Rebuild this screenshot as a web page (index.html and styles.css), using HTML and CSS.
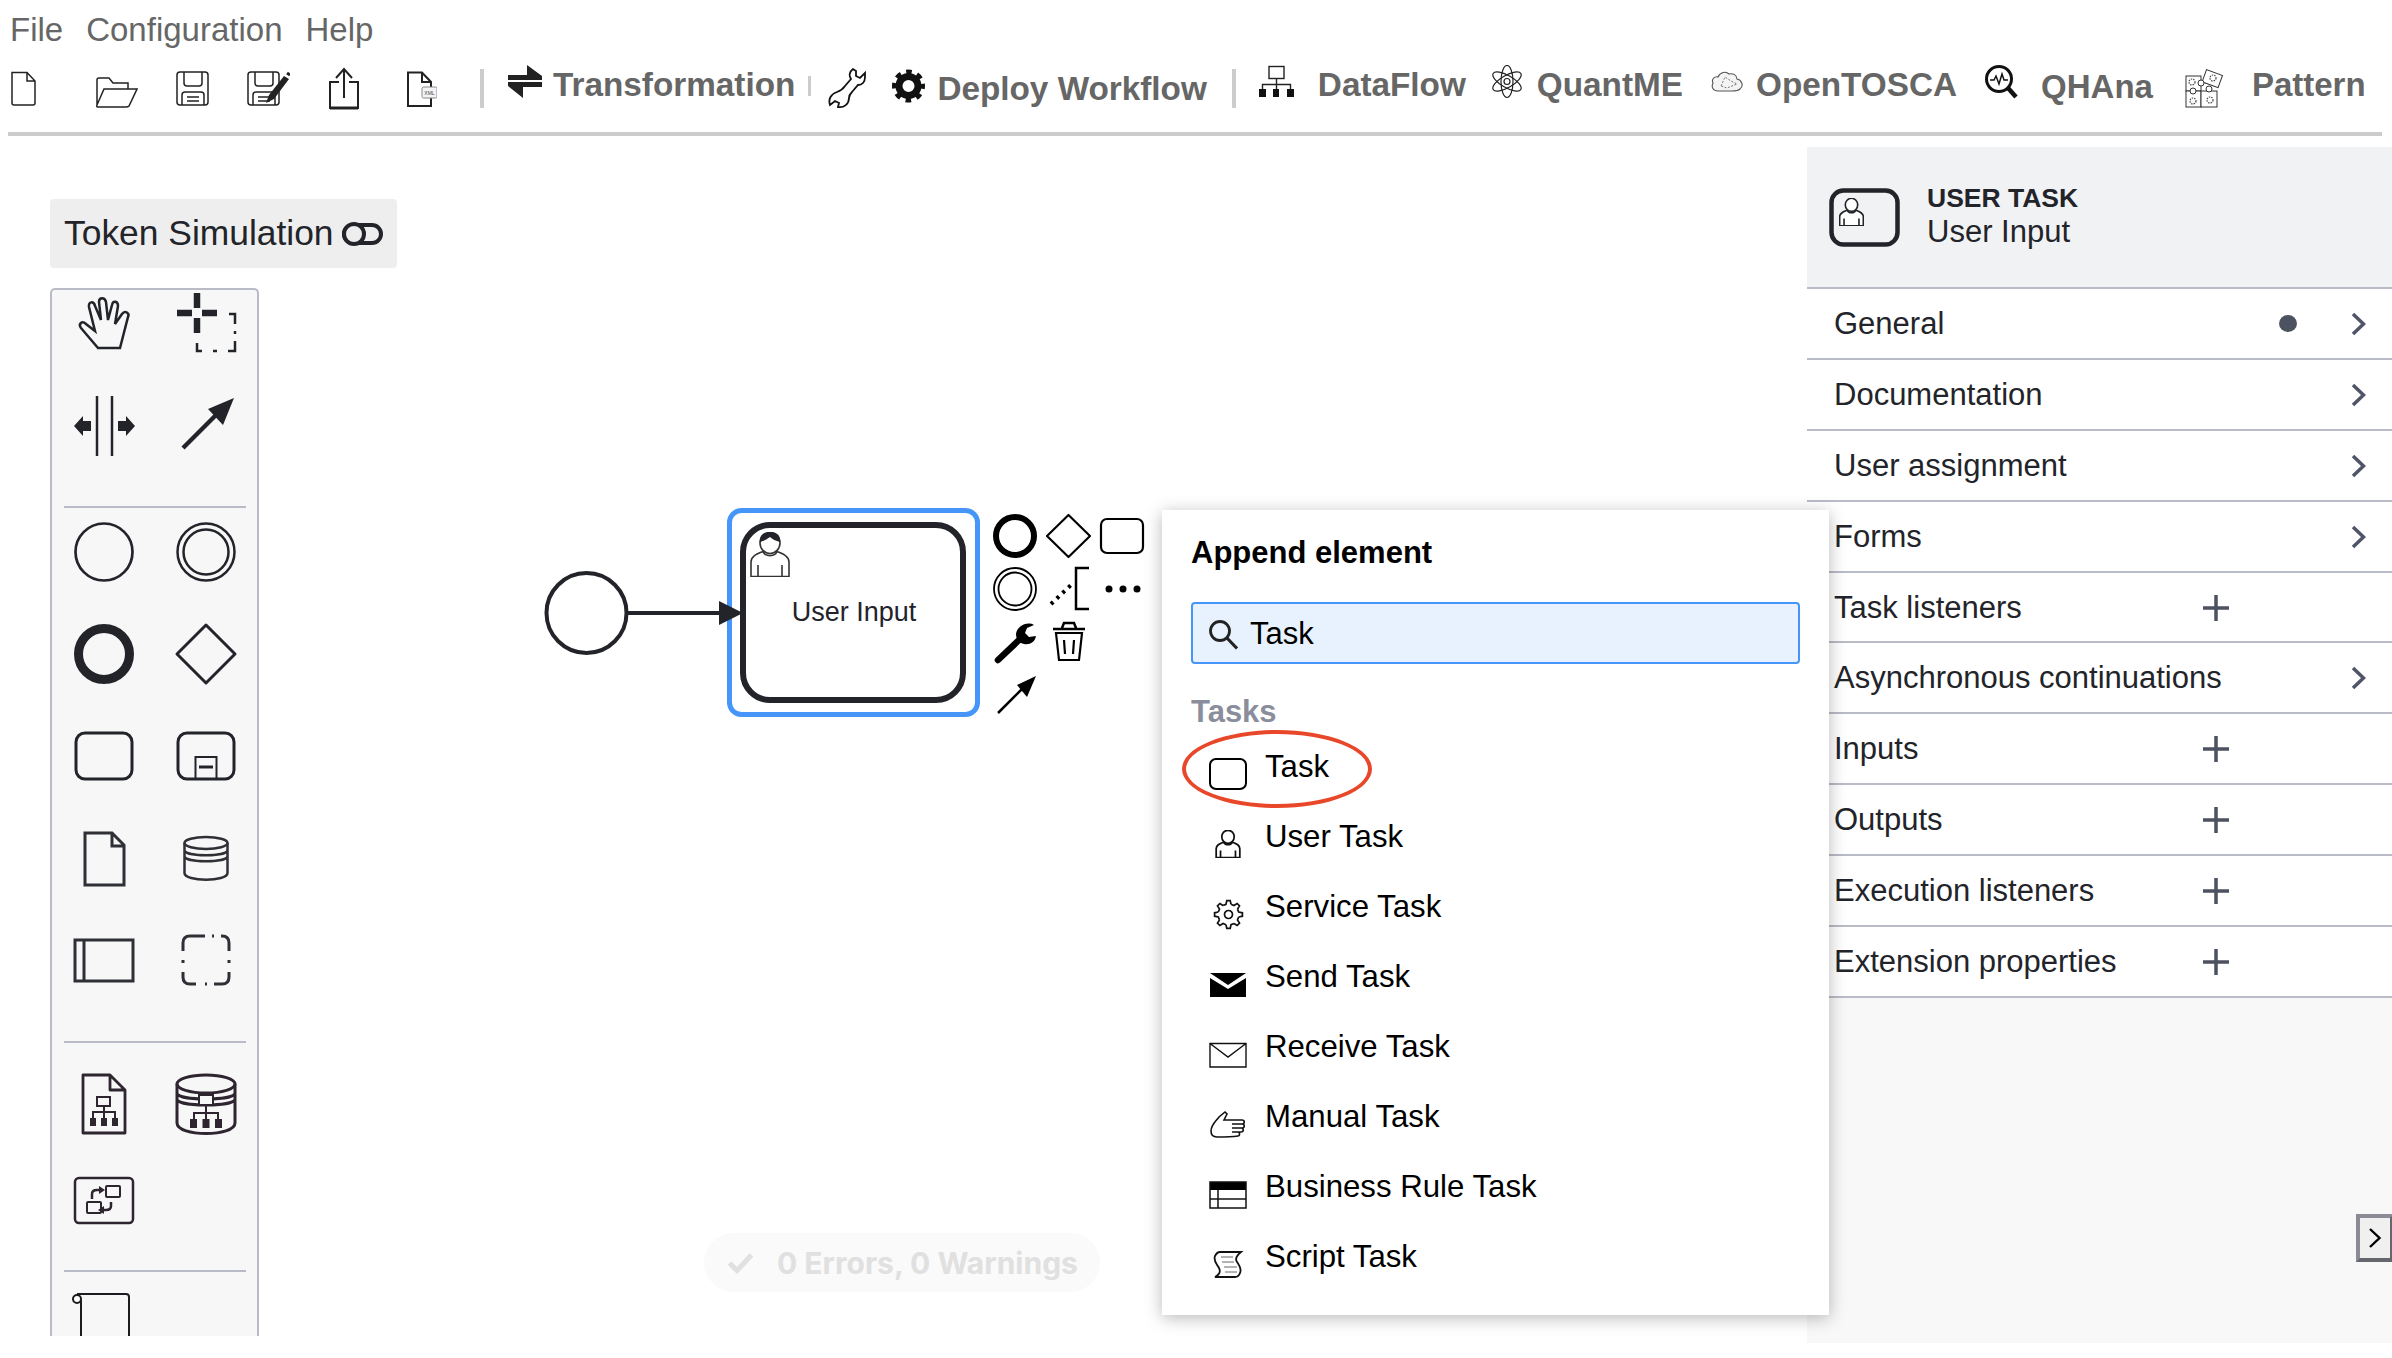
FILE: index.html
```html
<!DOCTYPE html>
<html lang="en">
<head>
  <meta charset="UTF-8"/>
  <title>Workflow Modeler</title>
  <link rel="stylesheet" href="styles.css">
</head>
<body>
  <svg class="defs" aria-hidden="true">
    <symbol id="user-line" viewBox="0 0 40 45">
      <path d="M1 44.500V30C1 24 7 22 13 19.500C15 25 25 25 27 19.500C33 22 39 24 39 30V44.500Z" fill="#fff" stroke="currentColor"/>
      <path d="M8 44V33M32 44V33" fill="none" stroke="currentColor"/>
      <ellipse cx="20" cy="11" rx="10" ry="10.500" fill="#fff" stroke="currentColor"/>
    </symbol>
    <symbol id="floppy" viewBox="0 0 33 46">
      <rect x="1" y="7" width="31" height="33" rx="3" fill="none" stroke="#222" stroke-width="1.500"/>
      <path d="M8 7V18Q8 21 11 21H23Q26 21 26 18V7M6 40V30Q6 27 9 27H25Q28 27 28 30V40M11 32H23M11 36H23" fill="none" stroke="#222" stroke-width="1.500"/>
    </symbol>
    <g id="cog-tooth">
      <path d="M2.500-10.200L1.700-13.900H-1.700L-2.500-10.200L-5.400-9" fill="none" stroke="#111" stroke-width="1.700"/>
    </g>
  </svg>

  <nav class="menubar">
    <span>File</span>
    <span>Configuration</span>
    <span>Help</span>
  </nav>

  <div class="toolbar">
    <svg class="t-new" width="25" height="46" viewBox="0 0 25 46"><path d="M1 7.500H16L24 16V38Q24 40 22 40H3Q1 40 1 38ZM16 7.500V16H24" fill="none" stroke="#222" stroke-width="1.500"/></svg>
    <svg class="t-open" width="43" height="46" viewBox="0 0 43 46"><path d="M2 40V15Q2 13 4 13H14L18 18H33V24M9 24H42L34 41Q33 42 31 42H3Q1 42 2 40Z" fill="none" stroke="#222" stroke-width="1.500"/></svg>
    <svg class="t-save" width="33" height="46"><use href="#floppy"/></svg>
    <svg class="t-saveas" width="43" height="46" viewBox="0 0 43 46">
      <use href="#floppy" width="33" height="46"/>
      <path d="M19 38L22 30L37 11L42 14L27 34Z" fill="#222"/>
      <path d="M40 8L43 10" stroke="#222" stroke-width="3"/>
    </svg>
    <svg class="t-upload" width="30" height="46" viewBox="0 0 30 46"><path d="M10 17H1V43H29V17H20" fill="none" stroke="#222" stroke-width="2"/><path d="M15 33V5M7 13L15 4L23 13" fill="none" stroke="#222" stroke-width="2"/><path d="M1 43H29" stroke="#222" stroke-width="3"/></svg>
    <svg class="t-xml" width="30" height="46" viewBox="0 0 30 46">
      <path d="M1 7.500H15L24 17V41H1ZM15 7.500V17H24" fill="none" stroke="#222" stroke-width="2"/>
      <rect x="15" y="22" width="15" height="11" rx="1.500" fill="#f4f4f4" stroke="#888"/>
      <text class="xml-tag" x="22.500" y="29.500" text-anchor="middle">XML</text>
    </svg>
    <div class="tb-sep t-sep1"></div>
    <svg class="t-trans" width="34" height="46" viewBox="0 0 34 46"><path d="M19 0L34 11V15H0V10H19ZM0 17H34V22H15V33L0 21Z" fill="#222"/></svg>
    <span class="tb-label l-trans">Transformation</span>
    <div class="tb-tick"></div>
    <svg class="t-wrench" width="38" height="46" viewBox="0 0 38 46"><path d="M25 4C21 7 21 11 23 14L17 21C15 24 12 26 9 27C3 29 0 34 2 40L7 36L11 38L10 42C16 43 21 39 21 33C21 31 22 29 24 27L30 20C34 20 37 17 37 12L37 8L32 13L28 11L28 6Z" fill="none" stroke="#111" stroke-width="1.800"/></svg>
    <svg class="t-gear" width="33" height="46" viewBox="0 0 33 46">
      <circle cx="16.500" cy="21" r="9.500" fill="none" stroke="#111" stroke-width="7"/>
      <circle cx="16.500" cy="21" r="14" fill="none" stroke="#111" stroke-width="5" stroke-dasharray="5.500 5.500" stroke-dashoffset="2.750"/>
    </svg>
    <span class="tb-label l-deploy">Deploy Workflow</span>
    <div class="tb-sep t-sep2"></div>
    <svg class="t-data" width="35" height="46" viewBox="0 0 35 46">
      <rect x="10" y="1.500" width="15" height="12" fill="none" stroke="#222" stroke-width="1.400"/>
      <path d="M17.500 13.500V20M3.500 25V19.500H31.500V25M17.500 20V25" fill="none" stroke="#222" stroke-width="1.400"/>
      <path d="M0 24H7V32H0ZM14 24H20V32H14ZM28 24H35V32H28Z" fill="#111"/>
    </svg>
    <span class="tb-label l-data">DataFlow</span>
    <svg class="t-atom" width="32" height="46" viewBox="0 0 32 46">
      <g fill="none" stroke="#222" stroke-width="1.200">
        <ellipse cx="16" cy="16.500" rx="6" ry="16"/>
        <ellipse cx="16" cy="16.500" rx="6" ry="16" transform="rotate(60 16 16.500)"/>
        <ellipse cx="16" cy="16.500" rx="6" ry="16" transform="rotate(-60 16 16.500)"/>
        <circle cx="16" cy="16.500" r="3"/>
      </g>
    </svg>
    <span class="tb-label l-quant">QuantME</span>
    <svg class="t-cloud" width="32" height="46" viewBox="0 0 32 46">
      <path d="M7 26C2 26 0 22 2 18C0 14 4 11 7 12C9 7 15 6 18 9C22 8 26 10 26 14C31 15 33 21 29 24C27 26 24 26 21 26Z" fill="#f4f4f4" stroke="#555" stroke-width="1.100"/>
      <path d="M10 21L14 12L20 16L26 19L16 23Z" fill="none" stroke="#777" stroke-width="1" stroke-dasharray="2 1.500"/>
    </svg>
    <span class="tb-label l-open">OpenTOSCA</span>
    <svg class="t-qhana" width="34" height="46" viewBox="0 0 34 46">
      <circle cx="15" cy="14" r="12.500" fill="none" stroke="#111" stroke-width="3"/>
      <path d="M24 23L32 32" stroke="#111" stroke-width="4.500"/>
      <path d="M6 15H10L12 11L15 19L18 9L20 15H24" fill="none" stroke="#111" stroke-width="1.500"/>
    </svg>
    <span class="tb-label l-qhana">QHAna</span>
    <svg class="t-pattern" width="40" height="46" viewBox="0 0 40 46">
      <g fill="#fff" stroke="#333" stroke-width="1">
        <rect x="1" y="11" width="15" height="15"/>
        <rect x="19" y="7" width="17" height="13" transform="rotate(20 27 13)"/>
        <rect x="1" y="26" width="15" height="16"/>
        <rect x="16" y="26" width="16" height="16"/>
        <circle cx="16" cy="18" r="3"/>
        <circle cx="24" cy="24" r="3"/>
        <circle cx="8" cy="26" r="3"/>
      </g>
      <g fill="none" stroke="#444" stroke-width="1.200" stroke-dasharray="1.500 1">
        <circle cx="7" cy="17" r="3"/>
        <circle cx="28" cy="13" r="3"/>
        <circle cx="8" cy="36" r="3"/>
        <circle cx="25" cy="35" r="3"/>
      </g>
    </svg>
    <span class="tb-label l-pattern">Pattern</span>
  </div>

  <div class="main">
    <div class="canvas">
      <div class="token-sim">
        <span>Token Simulation</span>
        <svg width="41" height="24" viewBox="0 0 41 24">
          <rect x="2" y="3" width="37" height="18" rx="9" fill="none" stroke="#22242a" stroke-width="4"/>
          <circle cx="12" cy="12" r="10" fill="#eee" stroke="#22242a" stroke-width="4"/>
        </svg>
      </div>

      <div class="palette">
        <div class="pal-group pal-tools">
          <svg class="pal-icon" viewBox="-32 -32 64 64"><path d="M-6 26L-23 6C-26 2-22-2-18 2L-9 9L-15-15C-16-21-10-21-9-16L-3-2L-5-20C-5-25 1-25 2-20L4-2L8-17C9-22 14-21 14-16L11 2L18-8C21-12 26-9 24-5L16 26Z" fill="none" stroke="#22242a" stroke-width="2.500"/></svg>
          <svg class="pal-icon" viewBox="-32 -32 64 64">
            <path d="M-9-29V-14M-9-4V11M-29-9H-14M-4-9H11" fill="none" stroke="#22242a" stroke-width="6.500"/>
            <path d="M23-8H29V2M29 9V12M29 19V29H22M11 29H7M-4 29H-9V21" fill="none" stroke="#22242a" stroke-width="2.500"/>
          </svg>
          <svg class="pal-icon" viewBox="-32 -32 64 64">
            <path d="M-7-30V30M8-30V30" stroke="#22242a" stroke-width="2.500"/>
            <path d="M-30 0L-21-10V-5H-13V5H-21V10ZM14-5H22V-10L31 0L22 10V5H14Z" fill="#22242a"/>
          </svg>
          <svg class="pal-icon" viewBox="-32 -32 64 64">
            <path d="M-23 22L12-13" stroke="#22242a" stroke-width="4.500"/>
            <path d="M28-28L2-17L17-1Z" fill="#22242a"/>
          </svg>
        </div>
        <div class="pal-sep"></div>
        <div class="pal-group pal-shapes">
          <svg class="pal-icon" viewBox="-32 -32 64 64"><circle r="28.500" fill="none" stroke="#22242a" stroke-width="2.700"/></svg>
          <svg class="pal-icon" viewBox="-32 -32 64 64"><circle r="28.500" fill="none" stroke="#22242a" stroke-width="2.500"/><circle r="22.500" fill="none" stroke="#22242a" stroke-width="2.500"/></svg>
          <svg class="pal-icon" viewBox="-32 -32 64 64"><circle r="25.500" fill="none" stroke="#22242a" stroke-width="9"/></svg>
          <svg class="pal-icon" viewBox="-32 -32 64 64"><path d="M0-29L29 0L0 29L-29 0Z" fill="none" stroke="#22242a" stroke-width="3" stroke-linejoin="round"/></svg>
          <svg class="pal-icon" viewBox="-32 -32 64 64"><rect x="-28" y="-23" width="56" height="46" rx="9" fill="none" stroke="#22242a" stroke-width="3"/></svg>
          <svg class="pal-icon" viewBox="-32 -32 64 64">
            <rect x="-28" y="-23" width="56" height="46" rx="9" fill="none" stroke="#22242a" stroke-width="3"/>
            <path d="M-10.500 23V1H10.500V23" fill="none" stroke="#22242a" stroke-width="2"/>
            <path d="M-7 11H7" stroke="#22242a" stroke-width="3"/>
          </svg>
          <svg class="pal-icon" viewBox="-32 -32 64 64"><path d="M-19-25H8L20-13V27H-19ZM8-25V-12H20" fill="none" stroke="#2f3036" stroke-width="3"/></svg>
          <svg class="pal-icon" viewBox="-32 -32 64 64">
            <ellipse cy="-15" rx="21.500" ry="6" fill="none" stroke="#2f3036" stroke-width="2.500"/>
            <path d="M-21.500-15V15C-21.500 24 21.500 24 21.500 15V-15M-21.500-8C-21.500-1 21.500-1 21.500-8M-21.500-2C-21.500 5 21.500 5 21.500-2" fill="none" stroke="#2f3036" stroke-width="2.500"/>
          </svg>
          <svg class="pal-icon" viewBox="-32 -32 64 64"><rect x="-29" y="-20" width="58" height="41" fill="none" stroke="#2f3036" stroke-width="3"/><path d="M-20-20V21" stroke="#2f3036" stroke-width="3"/></svg>
          <svg class="pal-icon" viewBox="-32 -32 64 64"><path d="M-23-9V-17Q-23-24-16-24H-1M6-24H8M15-24H16Q23-24 23-17V-9M-23 0V3M23 0V3M-23 12V17Q-23 24-16 24H-10M-1 24H1M8 24H16Q23 24 23 17V12" fill="none" stroke="#2f3036" stroke-width="3"/></svg>
        </div>
        <div class="pal-sep"></div>
        <div class="pal-group pal-data">
          <svg class="pal-icon" viewBox="-32 -32 64 64">
            <path d="M-21-29H6L21-14V29H-21ZM6-29V-14H21" fill="none" stroke="#2e2530" stroke-width="2.800" stroke-linejoin="round"/>
            <rect x="-7" y="-7" width="13" height="9" fill="none" stroke="#2e2530" stroke-width="2"/>
            <path d="M0 2V8M-11 14V8H11V14M0 8V14" fill="none" stroke="#2e2530" stroke-width="2"/>
            <path d="M-14 14H-8V22H-14ZM-3 14H3V22H-3ZM8 14H14V22H8Z" fill="#2e2530"/>
          </svg>
          <svg class="pal-icon" viewBox="-32 -32 64 64">
            <ellipse cy="-20" rx="29" ry="9" fill="none" stroke="#2e2530" stroke-width="3"/>
            <path d="M-29-20V19C-29 33 29 33 29 19V-20M-29-11C-29-3 29-3 29-11M-29-5C-29 3 29 3 29-5" fill="none" stroke="#2e2530" stroke-width="3"/>
            <rect x="-7" y="-9" width="14" height="10" fill="#f7f7f8" stroke="#2e2530" stroke-width="2"/>
            <path d="M0 1V9M-12 15V9H12V15M0 9V15" fill="none" stroke="#2e2530" stroke-width="2"/>
            <path d="M-16 15H-9V24H-16ZM-3.500 15H3.500V24H-3.500ZM9 15H16V24H9Z" fill="#2e2530"/>
          </svg>
          <svg class="pal-icon" viewBox="-32 -32 64 64">
            <rect x="-29" y="-22" width="58" height="45" rx="4" fill="none" stroke="#2e2530" stroke-width="2.500"/>
            <rect x="2" y="-14" width="14" height="11" rx="1" fill="none" stroke="#2e2530" stroke-width="2"/>
            <rect x="-17" y="2" width="14" height="11" rx="1" fill="none" stroke="#2e2530" stroke-width="2"/>
            <path d="M-12-1V-6Q-12-10-7-10H-4M7 2V6Q7 10 2 10H-1" fill="none" stroke="#2e2530" stroke-width="2.500"/>
            <path d="M-5-14L1-10L-5-6ZM0 6L-6 10L0 14Z" fill="#2e2530"/>
          </svg>
        </div>
        <div class="pal-sep"></div>
        <div class="pal-group pal-last">
          <svg class="pal-icon" viewBox="-32 -32 64 64">
            <path d="M-23-24V32M25 32V-27Q25-30 22-30H-27" fill="none" stroke="#1c1c20" stroke-width="2"/>
            <circle cx="-27" cy="-25" r="4" fill="#fff" stroke="#1c1c20" stroke-width="2"/>
          </svg>
        </div>
      </div>

      <svg class="diagram" viewBox="0 147 1807 1196">
        <circle cx="586.500" cy="613" r="40" fill="#fff" stroke="#22242a" stroke-width="4"/>
        <rect x="729.500" y="510.500" width="248" height="204" rx="12" fill="none" stroke="#4596f8" stroke-width="5"/>
        <rect x="743" y="525" width="220" height="175" rx="27" fill="#fff" stroke="#22242a" stroke-width="6"/>
        <path d="M627 613H722" stroke="#22242a" stroke-width="4"/>
        <path d="M719 601L743 613L719 625Z" fill="#22242a"/>
        <use href="#user-line" x="750" y="532" width="40" height="45" color="#333" stroke-width="1.600"/>
        <path d="M760 542C759 535 764 532 770 532C776 532 781 535 780 542C776 541 772 539 770 537C767 539 764 541 760 542Z" fill="#22242a"/>
        <text class="task-label" x="854" y="621" text-anchor="middle">User Input</text>

        <circle cx="1015" cy="536" r="19" fill="none" stroke="#000" stroke-width="6"/>
        <path d="M1068.500 515L1090 536L1068.500 557L1047 536Z" fill="none" stroke="#000" stroke-width="2.200" stroke-linejoin="round"/>
        <rect x="1101" y="519" width="42" height="34" rx="6" fill="none" stroke="#000" stroke-width="2.200"/>
        <circle cx="1015" cy="589" r="21" fill="none" stroke="#000" stroke-width="1.800"/>
        <circle cx="1015" cy="589" r="16.500" fill="none" stroke="#000" stroke-width="1.800"/>
        <path d="M1051 604L1072 584" stroke="#000" stroke-width="4" stroke-dasharray="3 5"/>
        <path d="M1089 568H1076V609H1089" fill="none" stroke="#000" stroke-width="2.500"/>
        <circle cx="1109" cy="589" r="3.500"/>
        <circle cx="1123" cy="589" r="3.500"/>
        <circle cx="1137" cy="589" r="3.500"/>
        <path d="M998 660L1019 640" stroke="#000" stroke-width="6.500" stroke-linecap="round"/>
        <path d="M1034 625C1027 621 1017 626 1016 634C1016 639 1019 643 1024 644C1030 645 1035 642 1036 636L1029 637L1025 633L1027 628Z" fill="#000"/>
        <path d="M1053 629H1085M1062 628L1064 623H1074L1076 628" fill="none" stroke="#000" stroke-width="2.500"/>
        <path d="M1056 633L1059 660H1079L1082 633ZM1064 640L1065 654M1074 640L1073 654" fill="none" stroke="#000" stroke-width="2.200"/>
        <path d="M998 713L1023 688" stroke="#000" stroke-width="2.500"/>
        <path d="M1036 676L1017 685L1027 697Z"/>
      </svg>

      <div class="lint-bar">
        <svg width="27" height="22" viewBox="0 0 27 22"><path d="M2.500 11L10 18.500L24.500 3" fill="none" stroke="#e0e0e0" stroke-width="5"/></svg>
        <span>0 Errors, 0 Warnings</span>
      </div>
    </div>

    <aside class="panel">
      <header class="panel-head">
        <svg width="71" height="59" viewBox="0 0 71 59">
          <rect x="2.500" y="2.500" width="66" height="54" rx="12" fill="none" stroke="#22242a" stroke-width="4.500"/>
          <use href="#user-line" x="10" y="10" width="25" height="28" color="#22242a" stroke-width="2.600"/>
        </svg>
        <div class="panel-title">
          <div class="panel-type">USER TASK</div>
          <div class="panel-name">User Input</div>
        </div>
      </header>
      <div class="group-row"><span class="group-name">General</span><i class="group-dot"></i><svg class="group-chev" width="15" height="24" viewBox="0 0 15 24"><path d="M2 2L12.500 12L2 22" fill="none" stroke="#505469" stroke-width="3.500"/></svg></div>
      <div class="group-row"><span class="group-name">Documentation</span><svg class="group-chev" width="15" height="24" viewBox="0 0 15 24"><path d="M2 2L12.500 12L2 22" fill="none" stroke="#505469" stroke-width="3.500"/></svg></div>
      <div class="group-row"><span class="group-name">User assignment</span><svg class="group-chev" width="15" height="24" viewBox="0 0 15 24"><path d="M2 2L12.500 12L2 22" fill="none" stroke="#505469" stroke-width="3.500"/></svg></div>
      <div class="group-row"><span class="group-name">Forms</span><svg class="group-chev" width="15" height="24" viewBox="0 0 15 24"><path d="M2 2L12.500 12L2 22" fill="none" stroke="#505469" stroke-width="3.500"/></svg></div>
      <div class="group-row"><span class="group-name">Task listeners</span><svg class="group-plus" width="26" height="26" viewBox="0 0 26 26"><path d="M13 0V26M0 13H26" stroke="#4d5260" stroke-width="3.500"/></svg></div>
      <div class="group-row"><span class="group-name">Asynchronous continuations</span><svg class="group-chev" width="15" height="24" viewBox="0 0 15 24"><path d="M2 2L12.500 12L2 22" fill="none" stroke="#505469" stroke-width="3.500"/></svg></div>
      <div class="group-row"><span class="group-name">Inputs</span><svg class="group-plus" width="26" height="26" viewBox="0 0 26 26"><path d="M13 0V26M0 13H26" stroke="#4d5260" stroke-width="3.500"/></svg></div>
      <div class="group-row"><span class="group-name">Outputs</span><svg class="group-plus" width="26" height="26" viewBox="0 0 26 26"><path d="M13 0V26M0 13H26" stroke="#4d5260" stroke-width="3.500"/></svg></div>
      <div class="group-row"><span class="group-name">Execution listeners</span><svg class="group-plus" width="26" height="26" viewBox="0 0 26 26"><path d="M13 0V26M0 13H26" stroke="#4d5260" stroke-width="3.500"/></svg></div>
      <div class="group-row"><span class="group-name">Extension properties</span><svg class="group-plus" width="26" height="26" viewBox="0 0 26 26"><path d="M13 0V26M0 13H26" stroke="#4d5260" stroke-width="3.500"/></svg></div>
    </aside>

    <button class="panel-toggle"><svg width="14" height="22" viewBox="0 0 14 22"><path d="M2 2L11.500 11L2 20" fill="none" stroke="#000" stroke-width="2.400"/></svg></button>

    <div class="popup">
      <div class="popup-title">Append element</div>
      <div class="popup-search">
        <svg width="31" height="31" viewBox="0 0 31 31"><circle cx="12" cy="12" r="9.500" fill="none" stroke="#222" stroke-width="2.800"/><path d="M18.500 18.500L29 29.500" stroke="#222" stroke-width="3.200"/></svg>
        <span>Task</span>
      </div>
      <div class="popup-group">Tasks</div>
      <div class="popup-item">
        <svg viewBox="0 0 38 32"><rect x="1" y="1" width="36" height="30" rx="6" fill="none" stroke="#000" stroke-width="2"/></svg>
        <span>Task</span>
      </div>
      <div class="popup-item">
        <svg viewBox="0 0 38 32"><use href="#user-line" x="6" y="2" width="26" height="28" color="#111" stroke-width="2.800"/></svg>
        <span>User Task</span>
      </div>
      <div class="popup-item">
        <svg viewBox="0 0 38 32">
          <g transform="translate(19.500 16.500)">
            <use href="#cog-tooth"/>
            <use href="#cog-tooth" transform="rotate(45)"/>
            <use href="#cog-tooth" transform="rotate(90)"/>
            <use href="#cog-tooth" transform="rotate(135)"/>
            <use href="#cog-tooth" transform="rotate(180)"/>
            <use href="#cog-tooth" transform="rotate(225)"/>
            <use href="#cog-tooth" transform="rotate(270)"/>
            <use href="#cog-tooth" transform="rotate(315)"/>
            <circle r="4" fill="none" stroke="#111" stroke-width="1.700"/>
          </g>
        </svg>
        <span>Service Task</span>
      </div>
      <div class="popup-item">
        <svg viewBox="0 0 38 32"><path d="M1 5H37L19 17ZM1 10L19 21L37 10V29H1Z" fill="#000"/></svg>
        <span>Send Task</span>
      </div>
      <div class="popup-item">
        <svg viewBox="0 0 38 32"><path d="M1 5.500H37V29H1ZM1 5.500L19 19L37 5.500" fill="none" stroke="#111" stroke-width="1.400"/></svg>
        <span>Receive Task</span>
      </div>
      <div class="popup-item">
        <svg viewBox="0 0 38 32"><path d="M2 23C2 17 7 13 10 9L16 4L18 6L15 12H33C36 12 36 16 33 16H23H33C36 16 36 20 33 20H23H32C35 20 35 24 32 24H23H29C31 24 31 28 29 28C22 29 14 29 8 29C4 29 2 27 2 23Z" fill="none" stroke="#111" stroke-width="1.600"/></svg>
        <span>Manual Task</span>
      </div>
      <div class="popup-item">
        <svg viewBox="0 0 38 32"><path d="M1 4H37V12H1Z" fill="#000"/><path d="M1 4H37V30H1ZM1 21H37M9 12V30" fill="none" stroke="#111" stroke-width="1.500"/></svg>
        <span>Business Rule Task</span>
      </div>
      <div class="popup-item">
        <svg viewBox="0 0 38 32"><path d="M11 4H32C27 8 26 11 28 14C30 17 33 21 31 25C30 28 28 29 26 29H6C10 27 12 24 10 20C8 16 4 13 6 8C7 6 9 4 11 4Z" fill="none" stroke="#111" stroke-width="1.800"/><path d="M12 9H24M13 14H25M15 19H28M16 24H28" stroke="#666" stroke-width="1"/></svg>
        <span>Script Task</span>
      </div>
      <div class="popup-mark"></div>
    </div>
  </div>
</body>
</html>
```

FILE: styles.css
```css
html, body {
  margin: 0;
  height: 1358px;
  overflow: hidden;
  background: #fff;
}
body {
  font-family: "Liberation Sans", Arial, sans-serif;
  color: #22242a;
}
.defs { position: absolute; width: 0; height: 0; }

/* menu */
.menubar {
  display: flex;
  gap: 23px;
  height: 55px;
  padding: 10px 0 0 10px;
  font-size: 33px;
  line-height: 40px;
  color: #666;
}

/* toolbar, every icon is 46 high so only the x gaps differ */
.toolbar {
  display: flex;
  align-items: flex-start;
  height: 67px;
  margin: 0 10px 0 8px;
  border-bottom: 4px solid #ccc;
}
.toolbar svg { flex: none; }
.tb-label {
  flex: none;
  margin-top: -3px;
  font-size: 33.300px;
  font-weight: bold;
  line-height: 46px;
  color: #666;
}
.tb-sep { flex: none; width: 4px; height: 39px; margin-top: 4px; background: #ccc; }
.tb-tick { flex: none; width: 3px; height: 20px; margin: 11px 0 0 13px; background: #ccc; }
.xml-tag { font-size: 5px; fill: #444; }

.t-new { margin-left: 3px; }
.t-open { margin-left: 59px; }
.t-save { margin-left: 38px; }
.t-saveas { margin-left: 38px; }
.t-upload { margin-left: 39px; }
.t-xml { margin-left: 48px; }
.t-sep1 { margin-left: 43px; }
.t-trans { margin-left: 24px; }
.l-trans { margin-left: 11px; }
.t-wrench { margin-left: 17px; }
.t-gear { margin-left: 26px; }
.l-deploy { margin: 1px 0 0 12px; }
.t-sep2 { margin-left: 25px; }
.t-data { margin-left: 23px; }
.l-data { margin-left: 24px; }
.t-atom { margin-left: 25px; }
.l-quant { margin-left: 14px; }
.t-cloud { margin-left: 28px; }
.l-open { margin-left: 13px; }
.t-qhana { margin-left: 27px; }
.l-qhana { margin: -1px 0 0 23px; font-size: 33px; }
.t-pattern { margin-left: 32px; }
.l-pattern { margin-left: 27px; font-size: 33px; }

/* main area */
.main {
  position: relative;
  display: flex;
  height: 1196px;
  margin-top: 11px;
}
.canvas { position: relative; flex: 1; }

.token-sim {
  position: absolute;
  left: 50px;
  top: 52px;
  display: flex;
  align-items: center;
  gap: 8px;
  box-sizing: border-box;
  width: 347px;
  height: 69px;
  padding-left: 14px;
  background: #eee;
  border-radius: 4px;
  font-size: 35.400px;
}

.palette {
  position: absolute;
  left: 50px;
  top: 141px;
  box-sizing: border-box;
  width: 209px;
  height: 1048px;
  overflow: hidden;
  background: #f7f7f8;
  border: 2px solid #b9bcc6;
  border-bottom: none;
  border-radius: 5px 5px 0 0;
}
.pal-group {
  display: grid;
  grid-template-columns: 102px 102px;
  justify-items: center;
  padding-left: 1px;
}
.pal-icon { display: block; width: 64px; height: 64px; overflow: visible; }
.pal-tools { row-gap: 39.5px; padding-bottom: 48.5px; }
.pal-shapes { row-gap: 38px; padding-top: 12px; padding-bottom: 49px; }
.pal-data { row-gap: 32px; padding-top: 29px; padding-bottom: 38px; }
.pal-last { padding-top: 20px; }
.pal-sep { height: 2px; margin: 0 11px 0 12px; background: #b9bcc6; }

.diagram {
  position: absolute;
  left: 0;
  top: 0;
  width: 1807px;
  height: 1196px;
}
.task-label { font-size: 27px; fill: #22242a; }

.lint-bar {
  position: absolute;
  left: 704px;
  top: 1086px;
  display: flex;
  align-items: center;
  gap: 23px;
  box-sizing: border-box;
  width: 396px;
  height: 59px;
  padding-left: 23px;
  background: #fafafa;
  border-radius: 30px;
  font-family: Inter, "Liberation Sans", sans-serif;
  font-size: 30px;
  font-weight: 700;
  color: #e0e0e0;
}

/* properties panel */
.panel {
  flex: none;
  width: 585px;
  background: #f8f8f8;
}
.panel-head {
  display: flex;
  align-items: center;
  gap: 27px;
  box-sizing: border-box;
  height: 142px;
  padding-left: 22px;
  background: #f1f2f4;
  border-bottom: 2px solid #b9bcc6;
}
.panel-title { margin-top: -5px; line-height: 34px; }
.panel-type { font-size: 26.500px; font-weight: bold; }
.panel-name { font-size: 31px; }
.group-row {
  display: grid;
  grid-template-columns: 1fr 72px 72px 68px;
  align-items: center;
  justify-items: center;
  box-sizing: border-box;
  height: 70.900px;
  padding: 1px 0 0 27px;
  background: #fff;
  border-bottom: 2px solid #b9bcc6;
  font-size: 31px;
}
.group-name { grid-column: 1; grid-row: 1; justify-self: start; min-width: 0; white-space: nowrap; }
.group-plus { grid-column: 2; grid-row: 1; }
.group-dot {
  grid-column: 3;
  grid-row: 1;
  width: 18px;
  height: 17px;
  background: #4d5260;
  border-radius: 50%;
}
.group-chev { grid-column: 4; grid-row: 1; }

.panel-toggle {
  position: absolute;
  right: -2px;
  top: 1067px;
  display: flex;
  align-items: center;
  justify-content: center;
  box-sizing: border-box;
  width: 38px;
  height: 48px;
  padding: 0;
  background: #f0f0f0;
  border: 4px solid;
  border-color: #8b8b96 #66666e #66666e #8b8b96;
}

/* append popup */
.popup {
  position: absolute;
  left: 1162px;
  top: 363px;
  box-sizing: border-box;
  width: 667px;
  height: 805px;
  padding: 23px 29px 0;
  background: #fff;
  box-shadow: 0 3px 16px rgba(0, 0, 0, 0.28);
  color: #000;
}
.popup-title { font-size: 31px; font-weight: bold; line-height: 40px; }
.popup-search {
  display: flex;
  align-items: center;
  gap: 11px;
  box-sizing: border-box;
  width: 609px;
  height: 62px;
  margin-top: 29px;
  padding: 2px 0 0 15px;
  background: #e8f2fe;
  border: 2px solid #4596f8;
  border-radius: 4px;
  font-size: 31px;
}
.popup-group {
  margin-top: 28px;
  font-size: 31px;
  font-weight: bold;
  line-height: 40px;
  color: #8a8d9b;
}
.popup-item {
  display: flex;
  align-items: center;
  gap: 18px;
  height: 70px;
  margin-left: 18px;
  font-size: 31.200px;
}
.popup-item svg { flex: none; width: 38px; height: 32px; margin-top: 14px; }
.popup-mark {
  position: absolute;
  left: 20px;
  top: 220px;
  box-sizing: border-box;
  width: 190px;
  height: 78px;
  border: 4px solid #e8472a;
  border-radius: 50%;
}
```
